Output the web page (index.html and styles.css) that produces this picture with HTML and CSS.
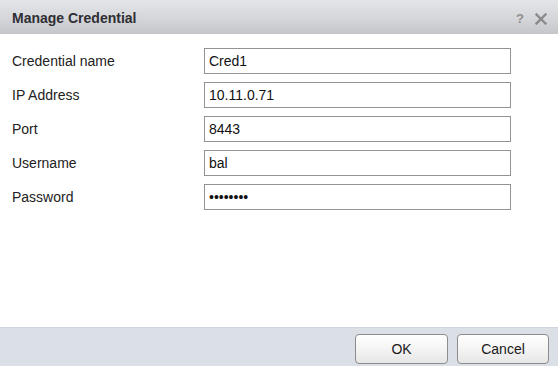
FILE: index.html
```html
<!DOCTYPE html>
<html>
<head>
<meta charset="utf-8">
<link rel="stylesheet" href="styles.css">
</head>
<body>
<div class="dialog">
  <div class="header">
    <div class="title">Manage Credential</div>
    <div class="tools">
      <span class="help">?</span>
      <svg class="close" width="12" height="12" viewBox="0 0 12 12"><path d="M1.5 1.5 L10.5 10.5 M10.5 1.5 L1.5 10.5" stroke="#8a8a8a" stroke-width="2.4" stroke-linecap="square"/></svg>
    </div>
  </div>
  <div class="body">
    <div class="form">
      <label class="label">Credential name</label>
      <input class="field" type="text" value="Cred1" readonly>
      <label class="label">IP Address</label>
      <input class="field" type="text" value="10.11.0.71" readonly>
      <label class="label">Port</label>
      <input class="field" type="text" value="8443" readonly>
      <label class="label">Username</label>
      <input class="field" type="text" value="bal" readonly>
      <label class="label">Password</label>
      <input class="field" type="password" value="password" readonly>
    </div>
  </div>
  <div class="footer">
    <button class="btn ok">OK</button>
    <button class="btn cancel">Cancel</button>
  </div>
</div>
</body>
</html>
```
FILE: styles.css
```css
html, body {
  margin: 0;
  padding: 0;
  background: #ffffff;
}
body {
  font-family: "Liberation Sans", Arial, sans-serif;
  font-size: 14px;
  color: #222;
}
.dialog {
  width: 558px;
  height: 366px;
  display: flex;
  flex-direction: column;
  overflow: hidden;
}
.header {
  height: 34px;
  flex: none;
  box-sizing: border-box;
  display: flex;
  align-items: center;
  justify-content: space-between;
  padding: 0 11px 0 12px;
  background: linear-gradient(to bottom, #e3e5e8 0%, #d4d6d9 55%, #c4c6c9 100%);
}
.title {
  font-weight: bold;
  font-size: 14px;
  color: #2e2e33;
  padding-top: 1px;
}
.tools {
  display: flex;
  align-items: center;
  gap: 11px;
  padding-top: 3px;
}
.help {
  font-size: 13px;
  font-weight: bold;
  color: #8f8f8f;
  line-height: 13px;
}
.close {
  display: block;
}
.body {
  flex: 1;
  padding: 14px 0 0 12px;
}
.form {
  display: grid;
  grid-template-columns: 192px 307px;
  row-gap: 8px;
  align-items: center;
}
.label {
  font-size: 14px;
  color: #222;
}
.field {
  height: 26px;
  box-sizing: border-box;
  border: 1px solid #939393;
  border-radius: 0;
  padding: 0 4px;
  margin: 0;
  font-family: "Liberation Sans", Arial, sans-serif;
  font-size: 14px;
  color: #111;
  background: #fff;
  outline: none;
}
.footer {
  height: 39px;
  flex: none;
  box-sizing: border-box;
  background: #dae0e6;
  border-top: 1px solid #cfd5dc;
  display: flex;
  justify-content: flex-end;
  align-items: flex-start;
  gap: 9px;
  padding: 6px 9px 0 0;
}
.btn {
  height: 30px;
  box-sizing: border-box;
  border: 1px solid #8c8c8c;
  border-radius: 4px;
  background: linear-gradient(to bottom, #ffffff 0%, #f4f4f4 50%, #e6e6e6 100%);
  font-family: "Liberation Sans", Arial, sans-serif;
  font-size: 14px;
  color: #1a1a1a;
  padding: 0;
  margin: 0;
}
.ok {
  width: 93px;
}
.cancel {
  width: 92px;
}
```
